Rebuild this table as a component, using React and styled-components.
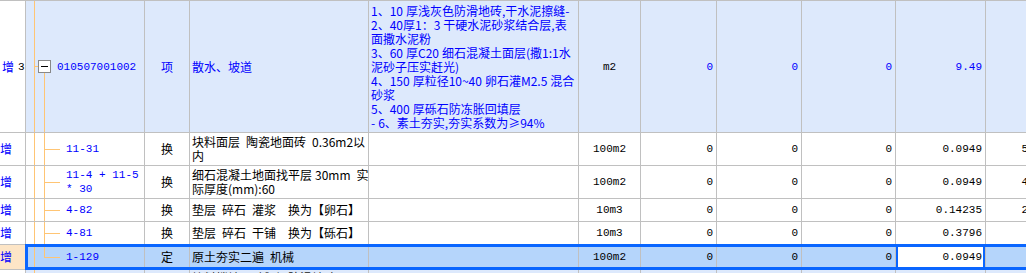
import styled, { createGlobalStyle } from 'styled-components';

const GRID = '#c0c0c0';
const TREE = '#ffc574';
const BLUE = '#0000ff';
const HEAD_BG = '#dde9fc';
const SEL_BG = '#b5d5fb';
const SEL_LINE = '#0a66ff';
const PEACH = '#fde5c6';

const COLS = '26px 119px 45px 179px 210px 62px 76px 85px 94px 90px 106px';

// SimSun 半角空格宽 6px：默认用 en space，挤的地方用更窄的空格
const sp = (s, narrow) => s.replace(/ /g, narrow ? '\u2005' : '\u2002');

const GlobalStyle = createGlobalStyle`
  html, body { margin: 0; padding: 0; background: #fff; overflow: hidden; }
  body {
    font-family: "Noto Sans CJK SC", "Noto Sans", sans-serif;
    font-size: 12px;
    line-height: 14px;
    color: #000;
  }
`;

const Sheet = styled.div`
  display: flex;
  flex-direction: column;
  width: max-content;
  border-top: 1px solid ${GRID};
`;

const Row = styled.div`
  display: grid;
  grid-template-columns: ${COLS};
  height: ${(p) => p.$h}px;
  background: ${(p) => (p.$selected ? SEL_BG : p.$bg || '#fff')};
  position: relative;

  ${(p) =>
    p.$selected &&
    `
    &::after {
      content: '';
      position: absolute;
      left: 25px;
      right: 0;
      top: -1px;
      bottom: 0;
      border: 3px solid ${SEL_LINE};
      border-right: none;
      pointer-events: none;
    }
  `}
`;

const alignMap = { left: 'flex-start', center: 'center', right: 'flex-end' };

const Cell = styled.div`
  box-sizing: border-box;
  display: flex;
  align-items: ${(p) => (p.$top ? 'flex-start' : 'center')};
  justify-content: ${(p) => alignMap[p.$align || 'left']};
  padding: ${(p) => (p.$top ? 1 : 0)}px ${(p) => p.$pr ?? 2}px 0 ${(p) => p.$pl ?? 2}px;
  border-right: 1px solid ${GRID};
  border-bottom: 1px solid ${GRID};
  background: ${(p) => p.$bg || 'transparent'};
  color: ${(p) => p.$color || '#000'};
  overflow: hidden;
  white-space: pre;
`;

const MarkCell = styled(Cell)`
  color: ${BLUE};
`;

const RowNo = styled.span`
  color: #000;
  margin-left: 4px;
  font-family: "Liberation Mono", monospace;
  font-size: 11px;
`;

const g = (x, y, w, h) => `linear-gradient(${TREE}, ${TREE}) ${x} ${y} / ${w} ${h} no-repeat`;

const treeLines = {
  root: [g('8px', '0', '1px', '100%'), g('8px', '50%', '5px', '1px'), g('18px', '100%', '1px', '50%')],
  mid: [g('8px', '0', '1px', '100%'), g('18px', '0', '1px', '100%'), g('18px', '50%', '16px', '1px')],
  last: [g('8px', '0', '1px', '100%'), g('18px', '0', '1px', '50%'), g('18px', '50%', '16px', '1px')],
  trunk: [g('8px', '0', '1px', '100%')],
};

const TreeCell = styled(Cell)`
  padding-left: ${(p) => (p.$kind === 'root' ? 12 : 40)}px;
  background: ${(p) => treeLines[p.$kind].join(', ')};
  color: ${BLUE};
`;

const Toggle = styled.span`
  box-sizing: border-box;
  position: relative;
  flex: none;
  width: 13px;
  height: 13px;
  margin-right: 6px;
  border: 1px solid #888;
  background: #fff;

  &::before {
    content: '';
    position: absolute;
    left: 2px;
    right: 2px;
    top: 5px;
    height: 1px;
    background: #000;
  }
`;

const Mono = styled.span`
  font-family: "Liberation Mono", "DejaVu Sans Mono", monospace;
  font-size: 11px;
  line-height: 14px;
`;

const ActiveCell = styled(Cell)`
  position: relative;
  background: #fff;

  &::after {
    content: '';
    position: absolute;
    left: -1px;
    right: -1px;
    top: 0;
    bottom: 0;
    border-left: 3px solid ${SEL_LINE};
    border-right: 3px solid ${SEL_LINE};
    pointer-events: none;
  }
`;

const desc = [
  '1、10 厚浅灰色防滑地砖,干水泥擦缝-',
  '2、40厚1：3 干硬水泥砂浆结合层,表',
  '面撒水泥粉',
  '3、60 厚C20 细石混凝土面层(撒1:1水',
  '泥砂子压实赶光)',
  '4、150 厚粒径10~40 卵石灌M2.5 混合',
  '砂浆',
  '5、400 厚砾石防冻胀回填层',
  '- 6、素土夯实,夯实系数为≥94%',
].join('\n');

const rows = [
  {
    kind: 'root', h: 132, bg: HEAD_BG, mark: true, no: '3', head: true,
    code: '010507001002', type: '项', name: '散水、坡道', desc,
    unit: 'm2', nums: ['0', '0', '0', '9.49', ''],
  },
  {
    kind: 'mid', h: 33, mark: true, code: '11-31', type: '换',
    name: '块料面层 陶瓷地面砖 0.36m2以\n内', unit: '100m2',
    nums: ['0', '0', '0', '0.0949', '56.94'],
  },
  {
    kind: 'mid', h: 33, mark: true, code: '11-4 + 11-5\n* 30', type: '换',
    name: '细石混凝土地面找平层 30mm  实\n际厚度(mm):60', narrow: true, unit: '100m2',
    nums: ['0', '0', '0', '0.0949', '47.44'],
  },
  {
    kind: 'mid', h: 23, mark: true, code: '4-82', type: '换',
    name: '垫层 碎石 灌浆  换为【卵石】', unit: '10m3',
    nums: ['0', '0', '0', '0.14235', '25.40'],
  },
  {
    kind: 'mid', h: 23, mark: true, code: '4-81', type: '换',
    name: '垫层 碎石 干铺  换为【砾石】', unit: '10m3',
    nums: ['0', '0', '0', '0.3796', ''],
  },
  {
    kind: 'last', h: 25, mark: true, selected: true, code: '1-129', type: '定',
    name: '原土夯实二遍 机械', unit: '100m2',
    nums: ['0', '0', '0', '0.0949', ''],
  },
  {
    kind: 'trunk', h: 30, bg: HEAD_BG, top: true, code: '', type: '项',
    name: '块料楼地面 铺贴 防滑地砖', unit: '', nums: ['', '', '', '', ''],
  },
];

export default function App() {
  return (
    <>
      <GlobalStyle />
      <Sheet>
        {rows.map((r, i) => {
          const txt = r.head ? BLUE : r.top ? '#222' : '#000';
          return (
            <Row key={i} $h={r.h} $bg={r.bg} $selected={r.selected}>
              <MarkCell $bg={r.selected ? PEACH : '#fff'} $pl={r.no ? 2 : 0} $top={r.top}>
                {r.mark && '增'}
                {r.no && <RowNo>{r.no}</RowNo>}
              </MarkCell>
              <TreeCell $kind={r.kind} $top={r.top}>
                {r.kind === 'root' && <Toggle />}
                <Mono>{r.code}</Mono>
              </TreeCell>
              <Cell $align="center" $color={txt} $top={r.top}>{r.type}</Cell>
              <Cell $color={txt} $top={r.top}>{sp(r.name, r.narrow)}</Cell>
              <Cell $color={BLUE} $top={r.top}>{r.desc ? sp(r.desc, true) : ''}</Cell>
              <Cell $align="center">
                <Mono>{r.unit}</Mono>
              </Cell>
              {r.nums.map((n, j) => {
                const Num = r.selected && j === 3 ? ActiveCell : Cell;
                const last = j === 4;
                return (
                  <Num key={j} $align={last ? 'center' : 'right'} $pr={3} $color={r.head ? BLUE : '#000'}>
                    <Mono>{n}</Mono>
                  </Num>
                );
              })}
            </Row>
          );
        })}
      </Sheet>
    </>
  );
}
